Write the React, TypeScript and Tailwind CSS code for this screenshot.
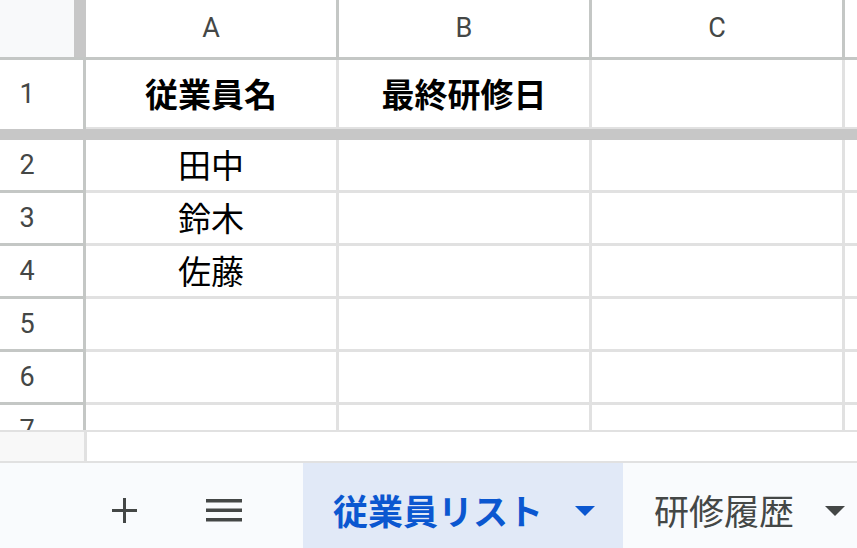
const cols = ["A", "B", "C"];

const rows: { label: string; cells: string[] }[] = [
  { label: "2", cells: ["田中", "", ""] },
  { label: "3", cells: ["鈴木", "", ""] },
  { label: "4", cells: ["佐藤", "", ""] },
  { label: "5", cells: ["", "", ""] },
  { label: "6", cells: ["", "", ""] },
  { label: "7", cells: ["", "", ""] },
];

const jp = "font-['Noto_Sans_CJK_JP',sans-serif]";
const hdr = "font-['Roboto','Liberation_Sans',sans-serif] text-[27px] text-[#444746]";

function Caret({ color }: { color: string }) {
  return (
    <svg width="20" height="10" viewBox="0 0 20 10" className="shrink-0">
      <polygon points="0,0 20,0 10,10" fill={color} />
    </svg>
  );
}

export default function App() {
  return (
    <div className="w-[857px] h-[548px] flex flex-col overflow-hidden bg-white">
      {/* grid viewport */}
      <div className="h-[430px] overflow-hidden flex flex-col shrink-0">
        {/* column headers */}
        <div className="flex h-[60px] shrink-0 border-b-[3px] border-[#c4c7c5]">
          <div className="w-[74px] bg-[#f8f9fa] shrink-0" />
          <div className="w-[12px] bg-[#c7c7c7] shrink-0" />
          {cols.map((c) => (
            <div
              key={c}
              className={`w-[253px] shrink-0 border-r-[3px] border-[#c4c7c5] flex items-center justify-center ${hdr}`}
            >
              {c}
            </div>
          ))}
          <div className="flex-1" />
        </div>

        {/* row 1 (frozen) */}
        <div className="flex h-[69px] shrink-0">
          <div
            className={`w-[86px] shrink-0 border-r-[3px] border-[#c4c7c5] flex items-center justify-center pr-[29px] ${hdr}`}
          >
            1
          </div>
          {["従業員名", "最終研修日", ""].map((t, i) => (
            <div
              key={i}
              className={`w-[253px] shrink-0 border-r-[3px] border-b-2 border-[#e1e1e1] flex items-center justify-center text-[33px] font-bold text-black ${jp}`}
            >
              {t}
            </div>
          ))}
          <div className="flex-1 border-b-2 border-[#e1e1e1]" />
        </div>
        <div className="h-[11px] bg-[#c7c7c7] shrink-0" />

        {rows.map((r) => (
          <div key={r.label} className="flex h-[53px] shrink-0">
            <div
              className={`w-[86px] shrink-0 border-r-[3px] border-b-[3px] border-[#c4c7c5] flex items-center justify-center pr-[29px] ${hdr}`}
            >
              {r.label}
            </div>
            {r.cells.map((t, i) => (
              <div
                key={i}
                className={`w-[253px] shrink-0 border-r-[3px] border-b-[3px] border-[#e1e1e1] flex items-center justify-center text-[33px] text-black ${jp}`}
              >
                {t}
              </div>
            ))}
            <div className="flex-1 border-b-[3px] border-[#e1e1e1]" />
          </div>
        ))}
      </div>

      <div className="h-[2px] bg-[#e1e1e1] shrink-0" />
      {/* horizontal scroll strip */}
      <div className="h-[29px] flex shrink-0">
        <div className="w-[87px] bg-[#f8f8f8] border-r-[3px] border-[#e1e1e1]" />
      </div>
      <div className="h-[2px] bg-[#e1e1e1] shrink-0" />

      {/* sheet tabs */}
      <div className="flex-1 flex bg-[#f9fbfd]">
        <div className="w-[303px] flex items-center shrink-0 pt-[9px]">
          <svg width="25" height="25" viewBox="0 0 25 25" className="ml-[112px]">
            <rect x="11" y="0" width="3" height="25" fill="#444746" />
            <rect x="0" y="11" width="25" height="3" fill="#444746" />
          </svg>
          <svg width="36" height="23" viewBox="0 0 36 23" className="ml-[69px]">
            <rect x="0" y="0" width="36" height="3.5" fill="#444746" />
            <rect x="0" y="9.5" width="36" height="3.5" fill="#444746" />
            <rect x="0" y="19" width="36" height="3.5" fill="#444746" />
          </svg>
        </div>
        <div className="w-[320px] shrink-0 bg-[#e1e9f7] flex items-center pl-[30px] pt-[7px]">
          <span className={`text-[35px] font-bold text-[#0b57d0] leading-none ${jp}`}>
            従業員リスト
          </span>
          <span className="ml-[32px] mt-[3px]">
            <Caret color="#0b57d0" />
          </span>
        </div>
        <div className="flex items-center pl-[31px] shrink-0 pt-[7px]">
          <span className={`text-[35px] text-[#444746] leading-none ${jp}`}>研修履歴</span>
          <span className="ml-[31px] mt-[3px]">
            <Caret color="#444746" />
          </span>
        </div>
      </div>
    </div>
  );
}
